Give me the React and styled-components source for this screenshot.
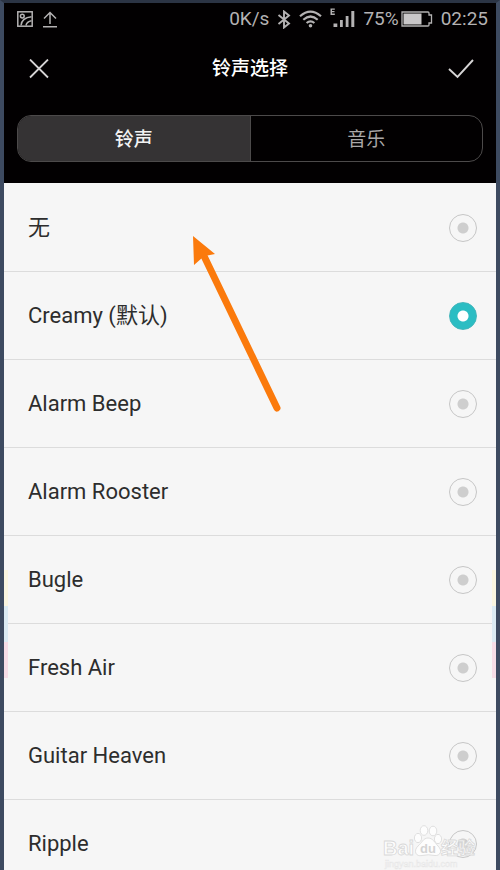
import React, { useState } from "react";
import styled, { createGlobalStyle } from "styled-components";

const GlobalStyle = createGlobalStyle`
  *, *::before, *::after { box-sizing: border-box; }
  body {
    margin: 0;
    background: #f6f6f6;
    font-family: Roboto, "Noto Sans CJK SC", sans-serif;
  }
`;

const Screen = styled.main`
  position: relative;
  display: flex;
  flex-direction: column;
  height: 100vh;
  overflow: hidden;
  border: solid #3d4a60;
  border-width: 3px 4px 0;
  border-top-color: #2b3444;
  background: #f6f6f6;
`;

const Header = styled.header`
  flex: none;
  padding-bottom: 21px;
  background: #020001;
  color: #fff;
`;

const StatusBar = styled.div`
  display: flex;
  align-items: center;
  justify-content: space-between;
  height: 32px;
  padding: 0 8px 0 13px;
  color: #b4b2b3;
  font-size: 19px;
  line-height: 24px;
`;

const StatusGroup = styled.div`
  display: flex;
  align-items: center;
  gap: ${({ $gap }) => $gap}px;
`;

const Battery = styled.span`
  display: flex;
  align-items: center;
  gap: 2px;
`;

const TitleBar = styled.div`
  display: grid;
  grid-template-columns: 1fr auto 1fr;
  align-items: center;
  height: 68px;
  padding: 0 22px;
`;

const Title = styled.h1`
  margin: 0;
  font-size: 19px;
  line-height: 28px;
  font-weight: 500;
`;

const IconButton = styled.button`
  display: flex;
  justify-self: ${({ $side }) => $side};
  padding: 0;
  border: 0;
  background: none;
  color: #d6d4d5;
  cursor: pointer;
`;

const Tabs = styled.div`
  display: flex;
  height: 47px;
  margin: 12px 13px 0;
  border: 1px solid #4c4a4a;
  border-radius: 14px;
  overflow: hidden;
`;

const Tab = styled.button`
  flex: 1;
  padding: 2px 0 0;
  border: 0;
  background: ${({ $active }) => ($active ? "#353334" : "transparent")};
  color: ${({ $active }) => ($active ? "#f2f2f2" : "#aaa8a9")};
  font-family: inherit;
  font-size: 19px;
  font-weight: ${({ $active }) => ($active ? 500 : 400)};
  line-height: 28px;
  cursor: pointer;

  & + & { border-left: 1px solid #4c4a4a; }
`;

const List = styled.div`
  flex: 1;
  min-height: 0;
  padding-top: 1px;
  overflow-y: auto;
  scrollbar-width: none;
`;

const Row = styled.label`
  display: flex;
  align-items: center;
  justify-content: space-between;
  height: 88px;
  padding: 0 19px 0 24px;
  border-bottom: 1px solid #dcdcdc;
  color: #2d2d2d;
  font-size: 22px;
  line-height: 32px;
  cursor: pointer;
`;

const Radio = styled.input`
  appearance: none;
  flex: none;
  width: 28px;
  height: 28px;
  margin: 0;
  border: 1px solid #c6c6c6;
  border-radius: 50%;
  background: radial-gradient(circle, #cecece 5px, transparent 6px);
  cursor: pointer;

  &:checked {
    border-color: #41b5bb;
    background: radial-gradient(circle, #fff 5px, #2bbdc3 6px);
  }
`;

const EdgeStripes = styled.div`
  position: absolute;
  top: 567px;
  ${({ $side }) => $side}: 0;
  width: 4px;
  height: 108px;
  background: linear-gradient(#faf5df 0 36px, #dcebf3 36px 72px, #f7dde6 72px);
`;

const Pointer = styled.svg`
  position: absolute;
  top: 229px;
  left: 184px;
  pointer-events: none;
`;

const Watermark = styled.svg`
  position: absolute;
  right: 3px;
  bottom: 0;
  pointer-events: none;
  font-family: "Liberation Sans", "Noto Sans CJK SC", sans-serif;
  font-weight: 700;
`;

function PictureIcon() {
  return (
    <svg width="16" height="16" viewBox="0 0 16 16" fill="none" stroke="currentColor" strokeWidth="1.5" aria-hidden="true">
      <rect x="0.8" y="0.8" width="14.4" height="14.4" />
      <circle cx="5.3" cy="5.1" r="1.9" />
      <path d="M4 14.5C4.5 9.5 8.5 6.3 14.5 5.8M9 14.5C9.5 12 11.5 10.3 14.5 9.8" />
    </svg>
  );
}

function UploadIcon() {
  return (
    <svg width="14" height="17" viewBox="0 0 14 17" fill="none" stroke="currentColor" strokeWidth="1.5" aria-hidden="true">
      <path d="M7 13V1.5M1 7.5L7 1.5L13 7.5M0 15.8H14" />
    </svg>
  );
}

function BluetoothIcon() {
  return (
    <svg width="14" height="19" viewBox="0 0 14 19" fill="none" stroke="currentColor" strokeWidth="1.9" aria-hidden="true">
      <path d="M1.5 5L12 13.5L7 17.5V1.5L12 5.5L1.5 14" />
    </svg>
  );
}

function WifiIcon() {
  return (
    <svg width="23" height="18" viewBox="0 0 23 18" fill="none" stroke="currentColor" strokeWidth="2.2" aria-hidden="true">
      <path d="M1 6.3Q11.5-3 22 6.3M4.3 9.7Q11.5 3.3 18.7 9.7M7.6 13Q11.5 9.6 15.4 13" />
      <circle cx="11.5" cy="15.7" r="1.8" fill="currentColor" stroke="none" />
    </svg>
  );
}

function SignalIcon() {
  return (
    <svg width="25" height="22" viewBox="0 0 25 22" fill="currentColor" aria-hidden="true">
      <path d="M0.5 0.5H4.8V1.8H2V3H4.5V4.2H2V5.6H4.8V6.9H0.5zM3.5 15.5H7.3V19H3.5zM10 12H12.8V19H10zM15.7 8H18.5V19H15.7zM21.3 3H24.3V19H21.3z" />
    </svg>
  );
}

function BatteryIcon() {
  return (
    <svg width="32" height="16" viewBox="0 0 32 16" aria-hidden="true">
      <path d="M1 1H27Q28 1 28 2V4H30.5V12H28V14Q28 15 27 15H1z" fill="none" stroke="currentColor" strokeWidth="1.3" />
      <rect x="2.5" y="2.5" width="18" height="11" fill="#c9c7c8" />
    </svg>
  );
}

function CloseIcon() {
  return (
    <svg width="26" height="20" viewBox="0 0 26 20" fill="none" stroke="currentColor" strokeWidth="1.8" aria-hidden="true">
      <path d="M4 0.5L22 18.5M22 0.5L4 18.5" />
    </svg>
  );
}

function CheckIcon() {
  return (
    <svg width="26" height="20" viewBox="0 0 26 20" fill="none" stroke="currentColor" strokeWidth="1.9" aria-hidden="true">
      <path d="M1 10L9.5 18L25 1" />
    </svg>
  );
}

const tones = [
  "无",
  "Creamy (默认)",
  "Alarm Beep",
  "Alarm Rooster",
  "Bugle",
  "Fresh Air",
  "Guitar Heaven",
  "Ripple",
];

export default function App() {
  const [tab, setTab] = useState("铃声");
  const [tone, setTone] = useState("Creamy (默认)");

  return (
    <Screen>
      <GlobalStyle />
      <Header>
        <StatusBar>
          <StatusGroup $gap={10}>
            <PictureIcon />
            <UploadIcon />
          </StatusGroup>
          <StatusGroup $gap={8}>
            <span>0K/s</span>
            <BluetoothIcon />
            <WifiIcon />
            <SignalIcon />
            <Battery>
              75%
              <BatteryIcon />
            </Battery>
            <span>02:25</span>
          </StatusGroup>
        </StatusBar>
        <TitleBar>
          <IconButton $side="start" aria-label="关闭">
            <CloseIcon />
          </IconButton>
          <Title>铃声选择</Title>
          <IconButton $side="end" aria-label="确定">
            <CheckIcon />
          </IconButton>
        </TitleBar>
        <Tabs role="tablist">
          {["铃声", "音乐"].map((name) => (
            <Tab
              key={name}
              role="tab"
              aria-selected={tab === name}
              $active={tab === name}
              onClick={() => setTab(name)}
            >
              {name}
            </Tab>
          ))}
        </Tabs>
      </Header>
      <List role="radiogroup" aria-label="铃声">
        {tones.map((name) => (
          <Row key={name}>
            <span>{name}</span>
            <Radio
              type="radio"
              name="tone"
              checked={tone === name}
              onChange={() => setTone(name)}
            />
          </Row>
        ))}
      </List>
      <EdgeStripes $side="left" />
      <EdgeStripes $side="right" />
      <Pointer width="100" height="184" viewBox="0 0 100 184" aria-hidden="true">
        <path d="M16 24L89 176" stroke="#fb7a0c" strokeWidth="7" strokeLinecap="round" />
        <path d="M5 4L27 22L17 24L14 26L6 33z" fill="#fb7a0c" />
      </Pointer>
      <Watermark width="110" height="48" viewBox="0 0 110 48" aria-hidden="true">
        <g fill="#fdfdfd" stroke="#d8d8d8" strokeWidth="0.8">
          <ellipse cx="35" cy="16" rx="3.6" ry="4.6" />
          <ellipse cx="41" cy="8.5" rx="3.8" ry="4.8" />
          <ellipse cx="50" cy="9" rx="3.8" ry="4.8" />
          <ellipse cx="55" cy="17" rx="3.6" ry="4.6" />
          <path d="M45 16C50 16 52 21 55 24C60 29 57 34 52 33.5Q45 32 39 33.5C33 35 30 29 35 24C39 21 40 16 45 16z" />
          <text x="0" y="33" fontSize="20">Bai</text>
          <text x="58" y="32" fontSize="17">经验</text>
        </g>
        <text x="37" y="31" fontSize="13" fill="#d4d4d4">du</text>
        <text x="2" y="45" fontSize="9" fontWeight="400" fill="#fff" stroke="#e6e6e6" strokeWidth="0.5">jingyan.baidu.com</text>
      </Watermark>
    </Screen>
  );
}
